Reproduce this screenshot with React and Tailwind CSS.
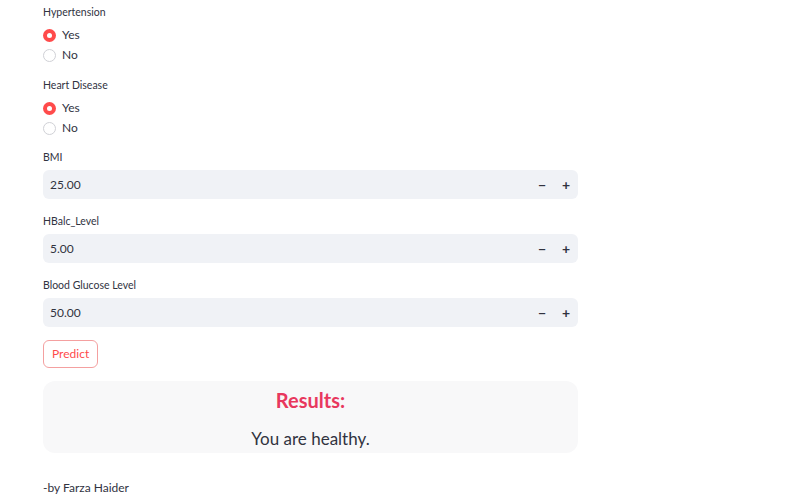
import React from "react";

const font = { fontFamily: "Lato, 'Noto Sans', sans-serif" };

const Radio = ({ label, checked }) => (
  <div className="flex items-center h-5">
    {checked ? (
      <span className="w-[13px] h-[13px] rounded-full bg-[#ff4b4b] flex items-center justify-center">
        <span className="w-[5px] h-[5px] rounded-full bg-white" />
      </span>
    ) : (
      <span className="w-[13px] h-[13px] rounded-full border border-[#d0d1d6] bg-white" />
    )}
    <span className="ml-[6px] text-[12px] text-[#31333f]">{label}</span>
  </div>
);

const RadioGroup = ({ label }) => (
  <div>
    <div className="text-[10.5px] text-[#31333f] h-4 leading-4">{label}</div>
    <div className="mt-[5px] flex flex-col">
      <Radio label="Yes" checked />
      <Radio label="No" />
    </div>
  </div>
);

const NumberInput = ({ label, value }) => (
  <div>
    <div className="text-[10.5px] text-[#31333f] h-4 leading-4">{label}</div>
    <div className="mt-[5px] h-[29px] w-[535px] bg-[#f0f2f6] rounded-md flex items-center">
      <span className="pl-[7px] flex-1 text-[12px] text-[#31333f]">{value}</span>
      <span className="w-6 text-center text-[14px] font-bold text-[#31333f]">−</span>
      <span className="w-6 text-center text-[14px] font-bold text-[#31333f]">+</span>
    </div>
  </div>
);

export default function App() {
  return (
    <div className="min-h-screen bg-white pl-[43px] pt-[4px]" style={font}>
      <div className="flex flex-col gap-[12px]">
        <RadioGroup label="Hypertension" />
        <RadioGroup label="Heart Disease" />
      </div>
      <div className="mt-[11px] flex flex-col gap-[14px]">
        <NumberInput label="BMI" value="25.00" />
        <NumberInput label="HBalc_Level" value="5.00" />
        <NumberInput label="Blood Glucose Level" value="50.00" />
      </div>
      <button className="mt-[13px] h-[28px] px-[8px] border border-[#f4a0a0] rounded-md text-[12px] leading-none text-[#ff4b4b] bg-white">
        Predict
      </button>
      <div className="mt-[13px] w-[535px] h-[72px] bg-[#f8f8f9] rounded-xl flex flex-col items-center">
        <div className="mt-[5px] text-[20px] font-bold text-[#e8385e] leading-7">Results:</div>
        <div className="mt-[13px] text-[17px] text-[#31333f] leading-6">You are healthy.</div>
      </div>
      <div className="mt-[27px] text-[12px] leading-4 text-[#31333f]">-by Farza Haider</div>
    </div>
  );
}
